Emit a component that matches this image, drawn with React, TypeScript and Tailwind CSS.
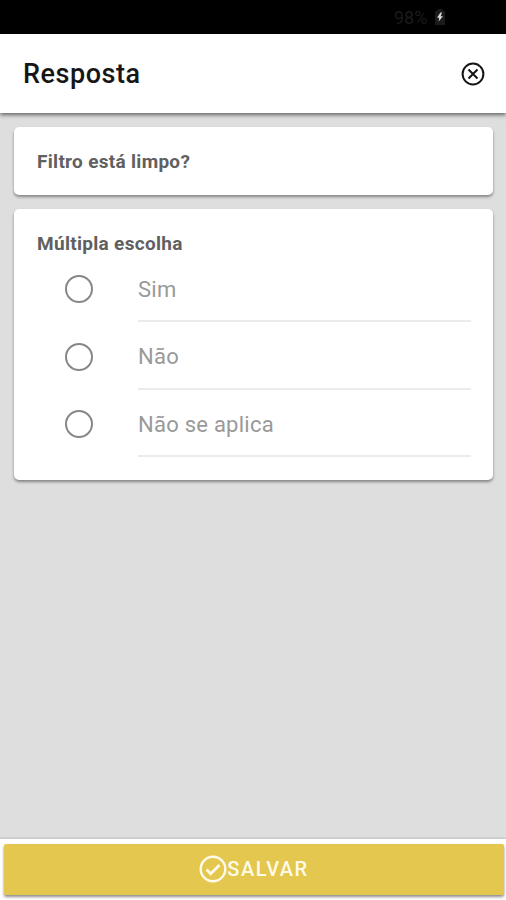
const options = ["Sim", "Não", "Não se aplica"];

function StatusBar() {
  return (
    <div className="flex h-[34px] shrink-0 items-center bg-black pl-[394px]">
      <span className="w-[36px] pt-0.5 text-[18px] leading-5 text-[#1b1b1b]">98%</span>
      <svg className="ml-[3px]" width="14" height="18" viewBox="0 0 14 18" aria-hidden>
        <path d="M4.500 1h5v2H12v14H2V3h2.500z" fill="#1b1b1b" />
        <path d="M7.500 4.500 4 9.700h2.200L5.600 13.500 10 8.200H7.700L9 4.500z" fill="#d6d6d6" />
      </svg>
    </div>
  );
}

function CloseIcon() {
  return (
    <svg width="24" height="24" viewBox="0 0 24 24" fill="none" stroke="#151515" aria-hidden>
      <circle cx="12" cy="12" r="10.400" strokeWidth="2" />
      <path d="M7.500 7.500l9 9M16.500 7.500l-9 9" strokeWidth="2" />
    </svg>
  );
}

function CheckIcon() {
  return (
    <svg width="28" height="28" viewBox="0 0 28 28" fill="none" stroke="#fffbe8" aria-hidden>
      <circle cx="14" cy="14" r="12.300" strokeWidth="2.400" />
      <path d="M7.500 14.600l4.200 4.200 8.800-8.800" strokeWidth="2.800" />
    </svg>
  );
}

export default function App() {
  return (
    <div className="flex h-[900px] w-[506px] flex-col overflow-hidden bg-[#dedede] font-['Roboto',sans-serif]">
      <StatusBar />

      <header className="flex h-[79px] shrink-0 items-center justify-between bg-white pr-[21px] pl-[23px] shadow-[0_2px_4px_rgba(0,0,0,0.55)]">
        <h1 className="text-[27px] leading-8 font-medium tracking-[0.55px] text-[#161616]">
          Resposta
        </h1>
        <button type="button" aria-label="Fechar">
          <CloseIcon />
        </button>
      </header>

      <main className="flex flex-1 flex-col gap-3.5 pt-3.5 pr-[13px] pl-3.5">
        <section className="h-[68px] rounded-[5px] bg-white pt-[23px] pl-[23px] shadow-[0_2px_3px_rgba(0,0,0,0.4)]">
          <h2 className="text-[19px] leading-6 font-bold tracking-[0.3px] text-[#606060]">
            Filtro está limpo?
          </h2>
        </section>

        <section className="h-[271px] rounded-[5px] bg-white pt-[23px] pr-[22px] pl-[23px] shadow-[0_2px_3px_rgba(0,0,0,0.4)]">
          <h2 className="text-[19px] leading-6 font-bold tracking-[0.3px] text-[#606060]">
            Múltipla escolha
          </h2>
          <div role="radiogroup" className="-mt-[1.500px]">
            {options.map((option) => (
              <label key={option} className="flex h-[67.600px] pl-7">
                <input
                  type="radio"
                  name="resposta"
                  className="mt-[20.500px] size-7 shrink-0 appearance-none rounded-full border-2 border-[#878787]"
                />
                <span className="ml-[45px] flex-1 border-b-2 border-[#ebebeb] pt-[23.200px] text-[22px] leading-6 tracking-[0.25px] text-[#999]">
                  {option}
                </span>
              </label>
            ))}
          </div>
        </section>
      </main>

      <footer className="h-[61px] shrink-0 bg-white pt-[5px] pr-[2px] pl-1 shadow-[0_-1px_2px_rgba(0,0,0,0.15)]">
        <button
          type="button"
          className="flex h-[51px] w-full items-center justify-center rounded-[2px] bg-[#e3c74e] pb-0.5 text-[20px] font-medium tracking-[1.500px] text-[#fffbe8] shadow-[0_2px_3px_rgba(0,0,0,0.45)]"
        >
          <CheckIcon />
          SALVAR
        </button>
      </footer>
    </div>
  );
}
